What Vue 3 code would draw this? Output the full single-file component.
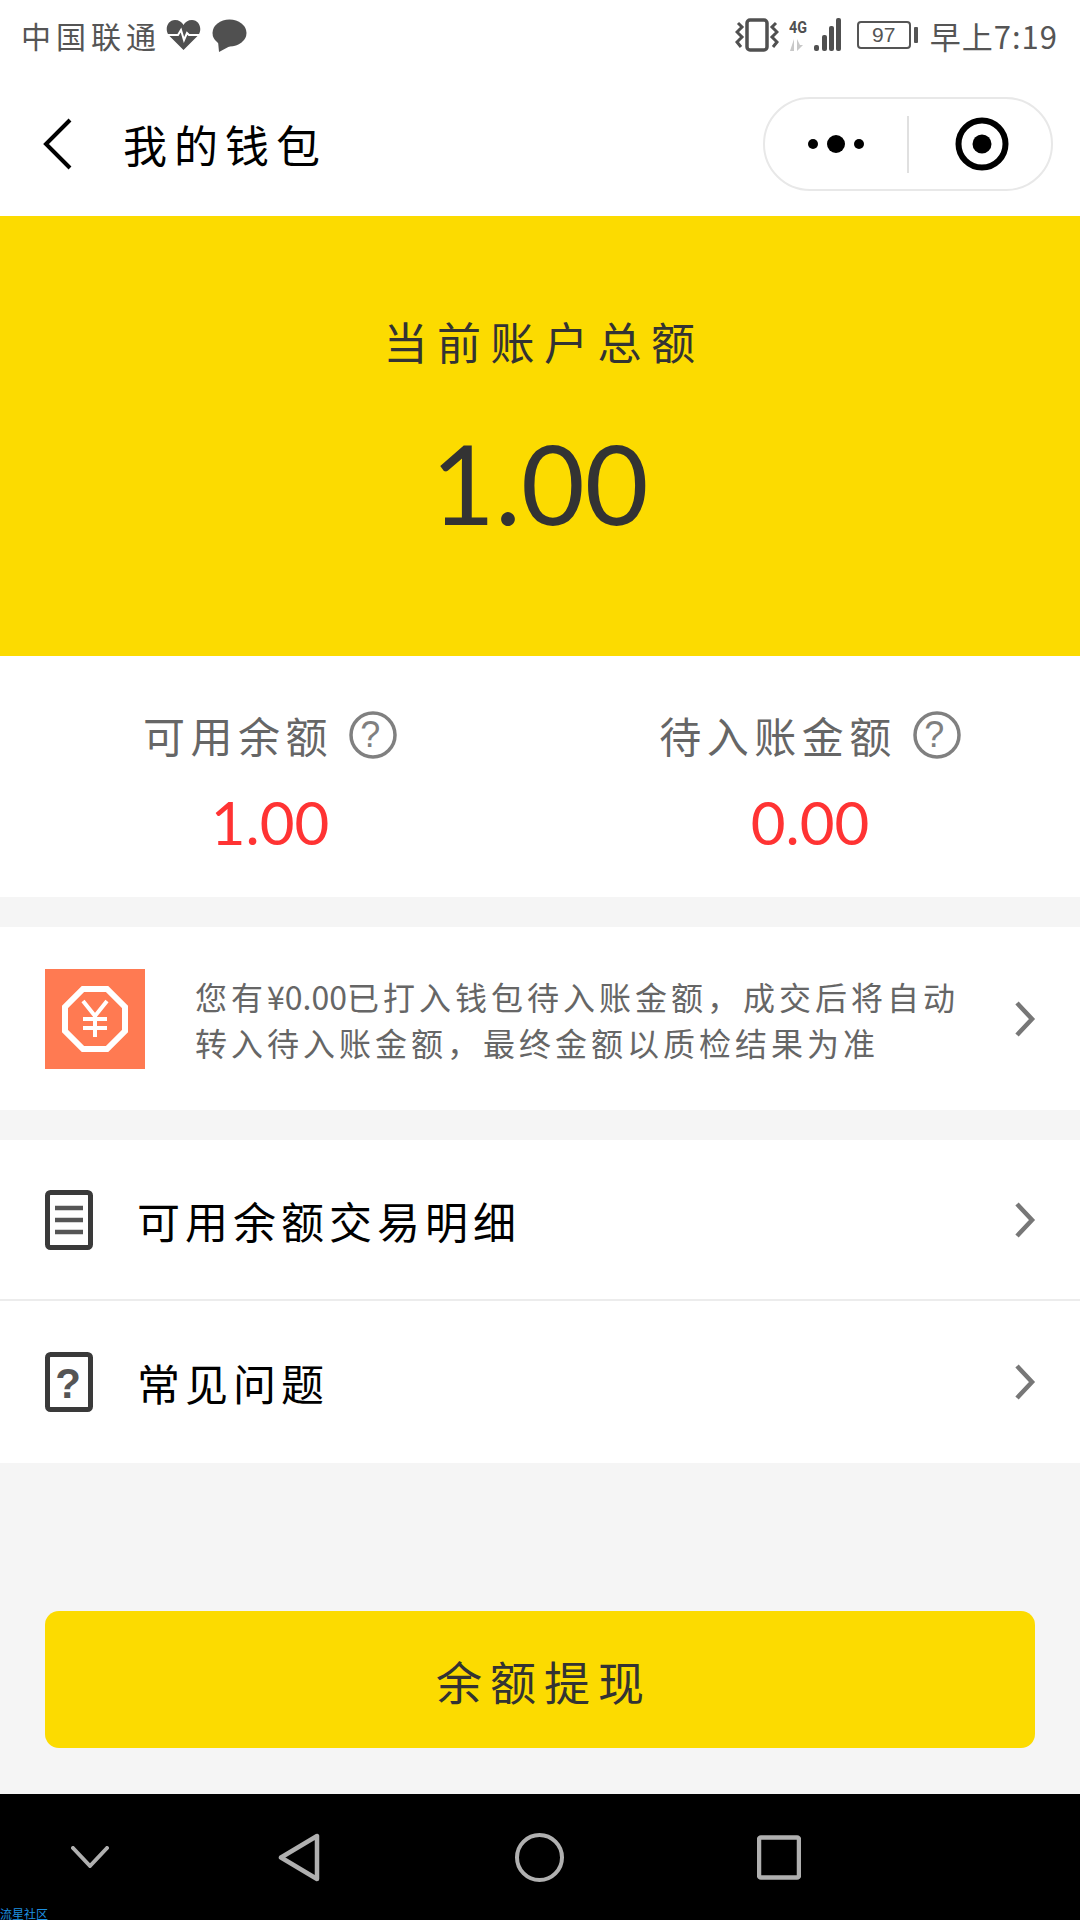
<script setup>
const stats = [
  { label: '可用余额', value: '1.00' },
  { label: '待入账金额', value: '0.00' }
]
</script>

<template>
  <div class="page">
    <div class="status-bar">
      <div class="status-left">
        <span class="carrier">中国联通</span>
        <svg class="heart" width="35" height="32" viewBox="0 0 35 32">
          <path d="M17.5 31 L2.5 16 C-1.5 10 1.5 1 9 1 C13 1 16 3 17.5 6 C19 3 22 1 26 1 C33.5 1 36.5 10 32.5 16 Z" fill="#505050" />
          <path d="M1 16 H12 L15 11 L18 21 L21 14 L23 16 H34" fill="none" stroke="#fff" stroke-width="2" />
        </svg>
        <svg class="bubble" width="35" height="33" viewBox="0 0 35 33">
          <ellipse cx="17.5" cy="14" rx="17" ry="13.5" fill="#505050" />
          <path d="M6 22 L7 33 L20 26 Z" fill="#505050" />
        </svg>
      </div>
      <div class="status-right">
        <svg class="vibrate" width="44" height="34" viewBox="0 0 44 34">
          <rect x="12" y="2" width="20" height="30" rx="3" fill="none" stroke="#505050" stroke-width="3.500" />
          <path d="M3 5 L7 9 L2 14 L7 19 L2 24 L6 29 M41 5 L37 9 L42 14 L37 19 L42 24 L38 29" fill="none" stroke="#505050" stroke-width="3" />
        </svg>
        <svg class="signal" width="52" height="34" viewBox="0 0 52 34">
          <text x="0" y="15" class="net" textLength="18" lengthAdjust="spacingAndGlyphs">4G</text>
          <path d="M5 21 V33 H1 Z" fill="#c8c8c8" />
          <path d="M8 21 V33 L14 27 H11 Z" fill="#c8c8c8" />
          <rect x="25" y="27" width="5" height="6" rx="2" fill="#505050" />
          <rect x="33" y="17" width="5" height="16" rx="2" fill="#505050" />
          <rect x="40" y="8" width="5" height="25" rx="2" fill="#505050" />
          <rect x="47" y="0" width="5" height="33" rx="2" fill="#505050" />
        </svg>
        <div class="battery">
          <span class="battery-box">97</span>
          <span class="battery-cap"></span>
        </div>
        <span class="clock">早上7:19</span>
      </div>
    </div>

    <div class="nav-bar">
      <svg class="back" width="30" height="52" viewBox="0 0 30 52">
        <path d="M27 2 L3 26 L27 50" fill="none" stroke="#000" stroke-width="4" />
      </svg>
      <span class="title">我的钱包</span>
      <div class="capsule">
        <svg width="60" height="20" viewBox="0 0 60 20">
          <circle cx="7" cy="10" r="5" fill="#000" />
          <circle cx="30" cy="10" r="9" fill="#000" />
          <circle cx="53" cy="10" r="5" fill="#000" />
        </svg>
        <span class="capsule-line"></span>
        <svg width="54" height="54" viewBox="0 0 54 54">
          <circle cx="27" cy="27" r="23.5" fill="none" stroke="#000" stroke-width="6" />
          <circle cx="27" cy="27" r="9.5" fill="#000" />
        </svg>
      </div>
    </div>

    <div class="total">
      <div class="total-label">当前账户总额</div>
      <div class="total-value">1.00</div>
    </div>

    <div class="stats">
      <div v-for="item in stats" :key="item.label" class="stat">
        <div class="stat-label">
          <span>{{ item.label }}</span>
          <svg width="48" height="48" viewBox="0 0 48 48">
            <circle cx="24" cy="24" r="22" fill="none" stroke="#808080" stroke-width="3.5" />
            <text x="24" y="36" text-anchor="middle" class="help-mark">?</text>
          </svg>
        </div>
        <div class="stat-value">{{ item.value }}</div>
      </div>
    </div>

    <div class="notice">
      <svg class="yuan" width="100" height="100" viewBox="0 0 100 100">
        <rect width="100" height="100" fill="#ff7a52" />
        <path d="M38 20 H62 L80 38 V62 L62 80 H38 L20 62 V38 Z" fill="none" stroke="#fff" stroke-width="6" />
        <path d="M38 32 L50 47 L62 32 M50 47 V68 M38 50 H62 M38 59 H62" fill="none" stroke="#fff" stroke-width="4" />
      </svg>
      <p class="notice-text">您有<span class="amount">¥0.00</span>已打入钱包待入账金额，成交后将自动转入待入账金额，最终金额以质检结果为准</p>
      <svg class="chevron" width="22" height="36" viewBox="0 0 22 36">
        <path d="M3 2 L18 18 L3 34" fill="none" stroke="#777" stroke-width="4.5" />
      </svg>
    </div>

    <div class="list">
      <div class="row row-first">
        <svg width="48" height="60" viewBox="0 0 48 60">
          <rect x="2.500" y="2.500" width="43" height="55" rx="3" fill="none" stroke="#3a3a3a" stroke-width="5" />
          <path d="M10 18 H38 M10 30 H38 M10 42 H38" stroke="#555" stroke-width="4.500" />
        </svg>
        <span class="row-text">可用余额交易明细</span>
        <svg class="chevron" width="22" height="36" viewBox="0 0 22 36">
          <path d="M3 2 L18 18 L3 34" fill="none" stroke="#777" stroke-width="4.5" />
        </svg>
      </div>
      <div class="row">
        <svg width="48" height="60" viewBox="0 0 48 60">
          <rect x="2.500" y="2.500" width="43" height="55" rx="3" fill="none" stroke="#3a3a3a" stroke-width="5" />
          <text x="23" y="46" text-anchor="middle" class="doc-mark">?</text>
        </svg>
        <span class="row-text">常见问题</span>
        <svg class="chevron" width="22" height="36" viewBox="0 0 22 36">
          <path d="M3 2 L18 18 L3 34" fill="none" stroke="#777" stroke-width="4.5" />
        </svg>
      </div>
    </div>

    <div class="action">
      <button class="withdraw">余额提现</button>
    </div>

    <div class="android-nav">
      <svg width="38" height="22" viewBox="0 0 38 22">
        <path d="M2 2 L19 20 L36 2" fill="none" stroke="#b0b0b0" stroke-width="4" stroke-linecap="round" stroke-linejoin="round" />
      </svg>
      <svg width="42" height="49" viewBox="0 0 42 49">
        <path d="M39 3 V46 L3 24.500 Z" fill="none" stroke="#b0b0b0" stroke-width="4.500" stroke-linejoin="round" />
      </svg>
      <svg width="49" height="49" viewBox="0 0 49 49">
        <circle cx="24.500" cy="24.500" r="22.500" fill="none" stroke="#b0b0b0" stroke-width="4" />
      </svg>
      <svg width="44" height="45" viewBox="0 0 44 45">
        <rect x="2" y="2.500" width="40" height="40" rx="2" fill="none" stroke="#b0b0b0" stroke-width="4.500" />
      </svg>
      <span class="watermark">流星社区</span>
    </div>
  </div>
</template>

<style scoped>
.page {
  position: relative;
  width: 1080px;
  height: 1920px;
  overflow: hidden;
  display: flex;
  flex-direction: column;
  background: #f5f5f5;
  font-family: "Noto Sans CJK SC", "Noto Sans", sans-serif;
}

.status-bar {
  height: 70px;
  background: #fff;
  display: flex;
  align-items: center;
  justify-content: space-between;
  padding: 0 22px 0 21px;
  color: #555;
  font-size: 30px;
}

.status-left,
.status-right {
  display: flex;
  align-items: center;
}

.carrier {
  letter-spacing: 5px;
}

.heart {
  margin-left: 5px;
}

.bubble {
  margin-left: 11px;
}

.signal {
  margin-left: 10px;
}

.net {
  font-family: "Roboto", sans-serif;
  font-size: 17px;
  font-weight: 700;
  fill: #505050;
}

.battery {
  display: flex;
  align-items: center;
  margin-left: 16px;
}

.battery-box {
  width: 54px;
  height: 28px;
  box-sizing: border-box;
  border: 2px solid #555;
  border-radius: 4px;
  display: flex;
  align-items: center;
  justify-content: center;
  font-family: "Liberation Sans", sans-serif;
  font-size: 21px;
}

.battery-cap {
  width: 4px;
  height: 16px;
  margin-left: 3px;
  background: #555;
  border-radius: 1px;
}

.clock {
  margin-left: 12px;
  font-size: 31px;
  letter-spacing: 1px;
}

.nav-bar {
  height: 146px;
  box-sizing: border-box;
  padding: 2px 27px 0 43px;
  background: #fff;
  display: flex;
  align-items: center;
}

.title {
  margin-left: 50px;
  font-size: 44px;
  letter-spacing: 7px;
  color: #000;
}

.capsule {
  margin-left: auto;
  width: 290px;
  height: 94px;
  box-sizing: border-box;
  border: 2px solid #e8e8e8;
  border-radius: 47px;
  display: flex;
  align-items: center;
  padding-left: 41px;
}

.capsule-line {
  width: 2px;
  height: 57px;
  margin: 0 46px 0 41px;
  background: #e0e0e0;
}

.total {
  height: 440px;
  background: #fcdb00;
  display: flex;
  flex-direction: column;
  align-items: center;
  color: #333;
}

.total-label {
  margin-top: 96px;
  font-size: 44px;
  line-height: 58px;
  letter-spacing: 9.500px;
  padding-left: 8px;
}

.total-value {
  margin-top: 42px;
  font-family: "Lato", sans-serif;
  font-size: 110px;
  line-height: 140px;
}

.stats {
  height: 241px;
  background: #fff;
  display: grid;
  grid-template-columns: 1fr 1fr;
}

.stat {
  display: flex;
  flex-direction: column;
  align-items: center;
  padding-top: 55px;
}

.stat-label {
  display: flex;
  align-items: center;
  gap: 16px;
  font-size: 42px;
  line-height: 48px;
  letter-spacing: 5.500px;
  color: #666;
}

.stat-label svg {
  display: block;
}

.help-mark {
  font-family: "Liberation Sans", sans-serif;
  font-size: 36px;
  fill: #808080;
}

.stat-value {
  margin-top: 28px;
  font-family: "Lato", sans-serif;
  font-size: 60px;
  line-height: 70px;
  color: #ff3333;
}

.notice {
  height: 183px;
  margin-top: 30px;
  background: #fff;
  display: flex;
  align-items: center;
  padding: 0 45px;
}

.yuan {
  flex: none;
}

.notice-text {
  width: 775px;
  margin: 0 0 0 50px;
  font-size: 32px;
  line-height: 46px;
  letter-spacing: 4px;
  color: #666;
}

.amount {
  letter-spacing: 0;
}

.chevron {
  flex: none;
  margin-left: auto;
  margin-right: -1px;
}

.list {
  margin-top: 30px;
  background: #fff;
}

.row {
  height: 162px;
  display: flex;
  align-items: center;
  padding: 0 45px;
}

.row-first {
  height: 161px;
  border-bottom: 2px solid #ececec;
  box-sizing: border-box;
}

.row-text {
  margin-left: 44px;
  font-size: 43px;
  letter-spacing: 5px;
  color: #000;
}

.doc-mark {
  font-family: "Liberation Sans", sans-serif;
  font-size: 42px;
  font-weight: 700;
  fill: #555;
}

.action {
  flex: 1;
  display: flex;
  align-items: flex-start;
  padding: 148px 45px 0;
}

.withdraw {
  width: 100%;
  height: 137px;
  border: none;
  border-radius: 14px;
  padding: 0 0 0 8px;
  background: #fcdb00;
  color: #333;
  font-family: inherit;
  font-size: 46px;
  letter-spacing: 8px;
}

.android-nav {
  height: 126px;
  background: #000;
  display: flex;
  align-items: center;
  padding-left: 71px;
  box-sizing: border-box;
  gap: 172px;
}

.android-nav svg:nth-child(2) {
  margin-right: 23px;
  margin-left: -3px;
}

.android-nav svg:nth-child(3) {
  margin-right: 21px;
}

.watermark {
  position: absolute;
  left: 0;
  bottom: 0;
  font-size: 12px;
  line-height: 13px;
  color: #1e90e0;
}
</style>

<style>
body {
  margin: 0;
  background: #f5f5f5;
}
</style>
